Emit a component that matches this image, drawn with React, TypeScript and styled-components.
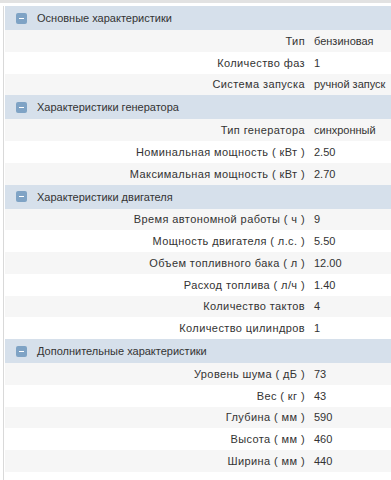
import * as React from "react";
import styled, { createGlobalStyle } from "styled-components";

interface Spec {
  label: string;
  value: string;
}

interface Section {
  title: string;
  rows: Spec[];
}

const sections: Section[] = [
  {
    title: "Основные характеристики",
    rows: [
      { label: "Тип", value: "бензиновая" },
      { label: "Количество фаз", value: "1" },
      { label: "Система запуска", value: "ручной запуск" },
    ],
  },
  {
    title: "Характеристики генератора",
    rows: [
      { label: "Тип генератора", value: "синхронный" },
      { label: "Номинальная мощность ( кВт )", value: "2.50" },
      { label: "Максимальная мощность ( кВт )", value: "2.70" },
    ],
  },
  {
    title: "Характеристики двигателя",
    rows: [
      { label: "Время автономной работы ( ч )", value: "9" },
      { label: "Мощность двигателя ( л.с. )", value: "5.50" },
      { label: "Объем топливного бака ( л )", value: "12.00" },
      { label: "Расход топлива ( л/ч )", value: "1.40" },
      { label: "Количество тактов", value: "4" },
      { label: "Количество цилиндров", value: "1" },
    ],
  },
  {
    title: "Дополнительные характеристики",
    rows: [
      { label: "Уровень шума ( дБ )", value: "73" },
      { label: "Вес ( кг )", value: "43" },
      { label: "Глубина ( мм )", value: "590" },
      { label: "Высота ( мм )", value: "460" },
      { label: "Ширина ( мм )", value: "440" },
    ],
  },
];

const GlobalStyle = createGlobalStyle`
  body {
    margin: 0;
    background: #fff;
    font-family: "Liberation Sans", Arial, sans-serif;
    font-size: 11px;
    color: #333;
  }
`;

const Page = styled.div`
  border-top: 3px solid #e2e2e2;
  padding-top: 3px;
  height: 474px;
`;

const SpecsWrapper = styled.div`
  margin-left: 3px;
  border-left: 1px solid #d9d9d9;
  padding-left: 1px;
  height: 100%;
`;

const SectionHeader = styled.div`
  display: flex;
  align-items: center;
  height: 24px;
  background: #d6e0eb;
  color: #333;
`;

const ToggleIcon = styled.span`
  display: flex;
  align-items: center;
  justify-content: center;
  width: 11px;
  height: 11px;
  margin: 0 10px 0 11px;
  border-radius: 2px;
  background: #7fa3c5;

  &::after {
    content: "";
    width: 5px;
    height: 1px;
    background: #fff;
  }
`;

const Row = styled.div<{ $odd: boolean }>`
  display: grid;
  grid-template-columns: 300px 1fr;
  align-items: center;
  height: 21.75px;
  background: ${(p) => (p.$odd ? "#f6f6f6" : "#fff")};
`;

const Label = styled.span`
  text-align: right;
  white-space: nowrap;
  letter-spacing: 0.4px;
`;

const Value = styled.span`
  padding-left: 9px;
  white-space: nowrap;
`;

const App = () => (
  <>
    <GlobalStyle />
    <Page>
      <SpecsWrapper>
        {sections.map((section) => (
          <div key={section.title}>
            <SectionHeader>
              <ToggleIcon />
              {section.title}
            </SectionHeader>
            {section.rows.map((row, i) => (
              <Row key={row.label} $odd={i % 2 === 0}>
                <Label>{row.label}</Label>
                <Value>{row.value}</Value>
              </Row>
            ))}
          </div>
        ))}
      </SpecsWrapper>
    </Page>
  </>
);

export default App;
